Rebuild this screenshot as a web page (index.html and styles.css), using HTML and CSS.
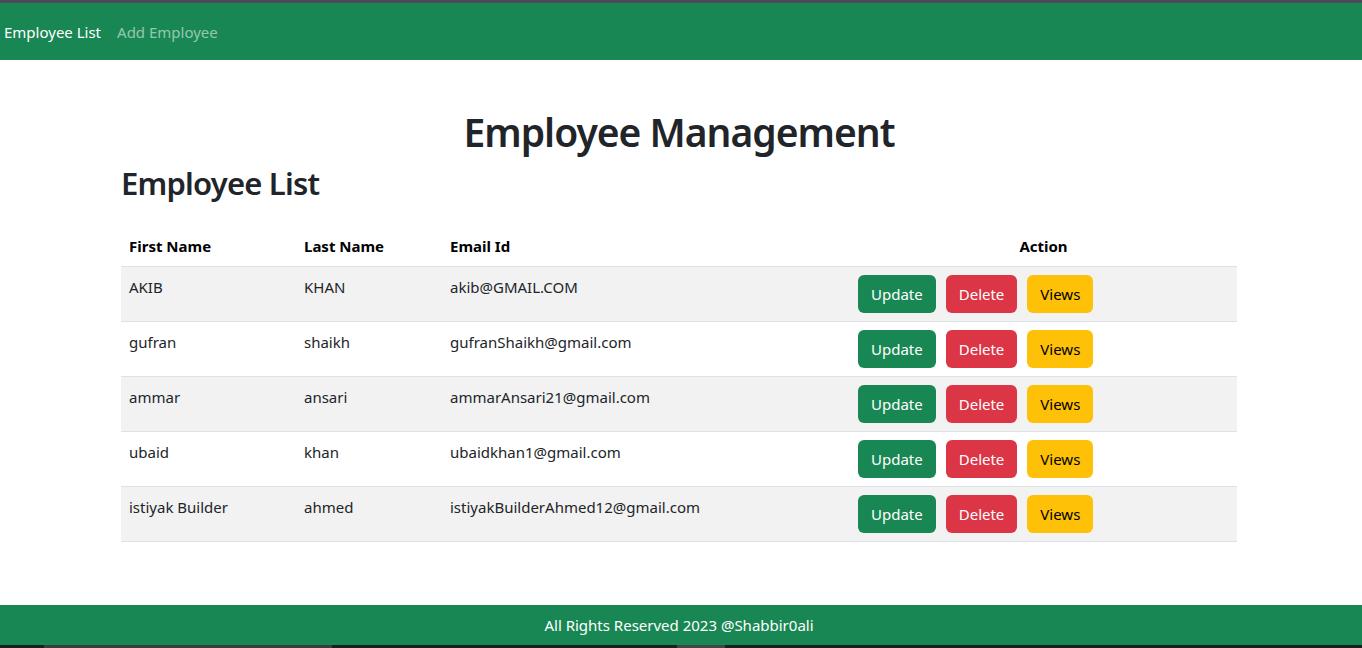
FILE: index.html
```html
<!DOCTYPE html>
<html lang="en">
<head>
<meta charset="utf-8">
<title>Employee Management</title>
<link rel="stylesheet" href="styles.css">
</head>
<body>
<div class="topstrip"></div>
<nav class="navbar">
  <a class="nav-link active" href="#">Employee List</a>
  <a class="nav-link" href="#">Add Employee</a>
</nav>
<main class="main">
  <div class="container">
    <h1 class="title">Employee Management</h1>
    <h2 class="subtitle">Employee List</h2>
    <table class="table">
      <thead>
        <tr>
          <th class="c-first">First Name</th>
          <th class="c-last">Last Name</th>
          <th class="c-email">Email Id</th>
          <th class="c-action">Action</th>
        </tr>
      </thead>
      <tbody>
        <tr class="odd">
          <td>AKIB</td><td>KHAN</td><td>akib@GMAIL.COM</td>
          <td><div class="actions"><button class="btn btn-success">Update</button><button class="btn btn-danger">Delete</button><button class="btn btn-warning">Views</button></div></td>
        </tr>
        <tr>
          <td>gufran</td><td>shaikh</td><td>gufranShaikh@gmail.com</td>
          <td><div class="actions"><button class="btn btn-success">Update</button><button class="btn btn-danger">Delete</button><button class="btn btn-warning">Views</button></div></td>
        </tr>
        <tr class="odd">
          <td>ammar</td><td>ansari</td><td>ammarAnsari21@gmail.com</td>
          <td><div class="actions"><button class="btn btn-success">Update</button><button class="btn btn-danger">Delete</button><button class="btn btn-warning">Views</button></div></td>
        </tr>
        <tr>
          <td>ubaid</td><td>khan</td><td>ubaidkhan1@gmail.com</td>
          <td><div class="actions"><button class="btn btn-success">Update</button><button class="btn btn-danger">Delete</button><button class="btn btn-warning">Views</button></div></td>
        </tr>
        <tr class="odd">
          <td>istiyak Builder</td><td>ahmed</td><td>istiyakBuilderAhmed12@gmail.com</td>
          <td><div class="actions"><button class="btn btn-success">Update</button><button class="btn btn-danger">Delete</button><button class="btn btn-warning">Views</button></div></td>
        </tr>
      </tbody>
    </table>
  </div>
</main>
<footer class="footer">All Rights Reserved 2023 @Shabbir0ali</footer>
<div class="bottomstrip">
  <span class="seg seg-a"></span>
  <span class="seg seg-b"></span>
</div>
</body>
</html>
```

FILE: styles.css
```css
* { box-sizing: border-box; }

html, body {
  margin: 0;
  padding: 0;
}

body {
  font-family: "Noto Sans", "Open Sans", sans-serif;
  font-size: 15px;
  line-height: 24px;
  color: #212529;
  background: #fff;
  min-height: 648px;
  display: flex;
  flex-direction: column;
}

.topstrip {
  height: 3px;
  background: #4b4b59;
}

.navbar {
  height: 57px;
  background: #198754;
  display: flex;
  align-items: center;
  gap: 16px;
  padding: 0 4px;
}

.nav-link {
  color: rgba(255, 255, 255, 0.55);
  text-decoration: none;
  font-size: 15px;
}

.nav-link.active {
  color: #fff;
}

.main {
  flex: 1;
}

.container {
  width: 1116px;
  margin-left: calc(50% - 560px);
}

.title {
  margin: 48px 0 8px;
  text-align: center;
  font-size: 39px;
  font-weight: 600;
  line-height: 48px;
  letter-spacing: -1px;
}

.subtitle {
  margin: 0 0 24px;
  font-size: 31px;
  font-weight: 600;
  line-height: 38px;
  letter-spacing: -0.8px;
}

.table {
  width: 100%;
  border-collapse: collapse;
}

.table th {
  text-align: left;
  font-weight: 700;
  color: #000;
  padding: 8px;
  border-bottom: 1px solid #dee2e6;
  vertical-align: bottom;
}

.table th.c-action {
  text-align: center;
}

.c-first { width: 175px; }
.c-last { width: 146px; }
.c-email { width: 408px; }
.c-action { width: 387px; }

.table td {
  padding: 8px;
  border-bottom: 1px solid #dee2e6;
  vertical-align: top;
}

.table tr.odd td {
  background: #f2f2f2;
}

.actions {
  display: flex;
  gap: 10px;
}

.btn {
  font-family: inherit;
  font-size: 15px;
  line-height: 24px;
  padding: 6px 12px;
  border: 1px solid transparent;
  border-radius: 6px;
  cursor: pointer;
}

.btn-success { background: #198754; color: #fff; }
.btn-danger { background: #dc3545; color: #fff; }
.btn-warning { background: #ffc107; color: #000; }

.footer {
  height: 40px;
  background: #198754;
  color: #fff;
  display: flex;
  align-items: center;
  justify-content: center;
  padding-right: 4px;
}

.bottomstrip {
  height: 3px;
  background: #1e1e1e;
  display: flex;
}

.seg {
  height: 3px;
  background: #3c3c3c;
}

.seg-a {
  margin-left: 44px;
  width: 288px;
}

.seg-b {
  margin-left: 345px;
  width: 48px;
  background: #454545;
}
```
